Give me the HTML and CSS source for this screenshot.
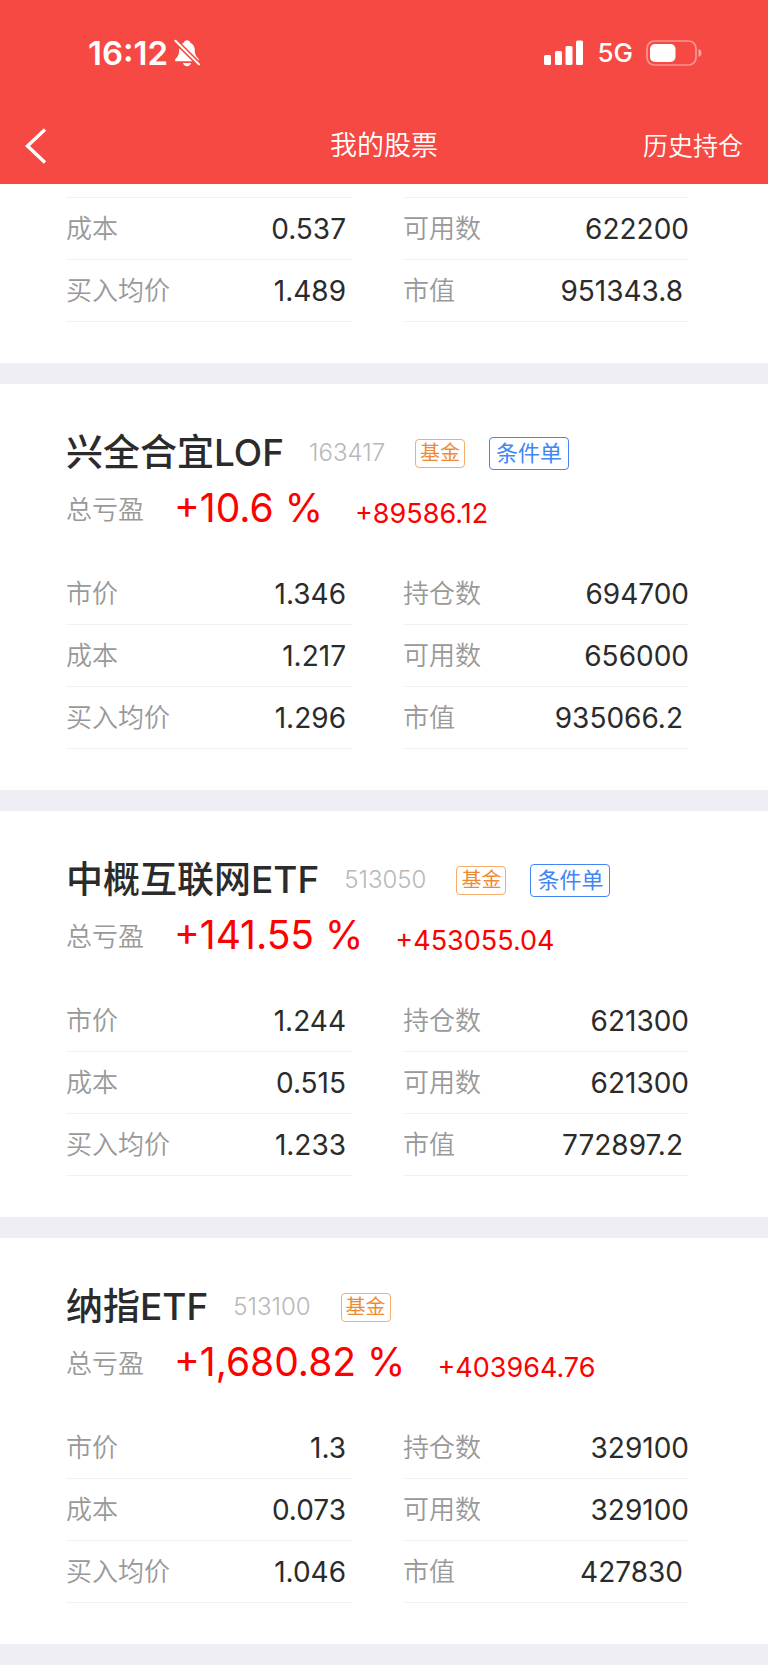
FILE: index.html
```html
<!DOCTYPE html>
<html lang="zh-CN">
<head>
<meta charset="utf-8">
<meta name="viewport" content="width=device-width, initial-scale=1">
<title>我的股票</title>
<link rel="stylesheet" href="styles.css">
</head>
<body>
<header class="header">
  <div class="status">
    <div class="status-left">
      <span class="time">16:12</span>
      <svg class="bell" viewBox="0 0 26 28" width="26" height="28" aria-hidden="true">
        <path d="M13 1.2c-1.7 0-3 1-3.3 2.500C6.600 5 5.300 7.800 5.200 11c-.1 4.200-1 6.200-2.900 7.900-1.200 1.100-1.300 1.900-1.200 2.600.1.500.5.700 1.100.7h21.600c.6 0 1-.2 1.100-.7.1-.7 0-1.500-1.200-2.600-1.900-1.700-2.800-3.700-2.900-7.900-.1-3.200-1.400-6-4.500-7.300C16 2.200 14.700 1.200 13 1.200z" fill="#fff"/>
        <path d="M9 24h8c-.4 2-2 3.200-4 3.200S9.400 26 9 24z" fill="#fff"/>
        <path d="M0 .4l26 26" stroke="#f64943" stroke-width="5"/>
        <path d="M1.400 1.800l23.600 23.600" stroke="#fff" stroke-width="2" stroke-linecap="round"/>
      </svg>
    </div>
    <div class="status-right">
      <svg viewBox="0 0 40 26" width="40" height="26" fill="#fff" aria-hidden="true">
        <rect x="0" y="15" width="7" height="10" rx="1.500"/>
        <rect x="11" y="11" width="7" height="14" rx="1.500"/>
        <rect x="21.500" y="6" width="7" height="19" rx="1.500"/>
        <rect x="32" y="0.500" width="7" height="24.500" rx="1.500"/>
      </svg>
      <span class="network">5G</span>
      <svg class="battery" viewBox="0 0 56 26" width="56" height="26" aria-hidden="true">
        <rect x="1" y="1" width="49" height="24" rx="7.500" fill="none" stroke="#fff" stroke-opacity=".42" stroke-width="1.700"/>
        <path d="M52.500 9c1.800.6 3 2.200 3 4s-1.200 3.400-3 4z" fill="#fff" fill-opacity=".5"/>
        <rect x="4" y="4" width="25.500" height="18" rx="5" fill="#fff"/>
      </svg>
    </div>
  </div>
  <nav class="nav">
    <button class="back" type="button" aria-label="返回">
      <svg viewBox="0 0 22 36" width="22" height="36" aria-hidden="true"><path d="M20 1.500L2.500 18 20 34.500" fill="none" stroke="#fff" stroke-width="3.400"/></svg>
    </button>
    <h1 class="page-title">我的股票</h1>
    <a class="history" href="#">历史持仓</a>
  </nav>
</header>
<main>
  <section class="card card-partial">
    <dl class="metrics">
      <div class="metric"><dt>成本</dt><dd>0.537</dd></div>
      <div class="metric flush"><dt>可用数</dt><dd>622200</dd></div>
      <div class="metric"><dt>买入均价</dt><dd>1.489</dd></div>
      <div class="metric"><dt>市值</dt><dd>951343.8</dd></div>
    </dl>
  </section>
  <section class="card">
    <div class="heading">
      <h2 class="name">兴全合宜LOF</h2><span class="code">163417</span><span class="tag">基金</span><button class="order" type="button">条件单</button>
    </div>
    <div class="profit"><span class="profit-label">总亏盈</span><span class="percent">+10.6 %</span><span class="amount">+89586.12</span></div>
    <dl class="metrics">
      <div class="metric"><dt>市价</dt><dd>1.346</dd></div>
      <div class="metric flush"><dt>持仓数</dt><dd>694700</dd></div>
      <div class="metric"><dt>成本</dt><dd>1.217</dd></div>
      <div class="metric flush"><dt>可用数</dt><dd>656000</dd></div>
      <div class="metric"><dt>买入均价</dt><dd>1.296</dd></div>
      <div class="metric"><dt>市值</dt><dd>935066.2</dd></div>
    </dl>
  </section>
  <section class="card">
    <div class="heading">
      <h2 class="name">中概互联网ETF</h2><span class="code">513050</span><span class="tag">基金</span><button class="order" type="button">条件单</button>
    </div>
    <div class="profit"><span class="profit-label">总亏盈</span><span class="percent">+141.55 %</span><span class="amount">+453055.04</span></div>
    <dl class="metrics">
      <div class="metric"><dt>市价</dt><dd>1.244</dd></div>
      <div class="metric flush"><dt>持仓数</dt><dd>621300</dd></div>
      <div class="metric"><dt>成本</dt><dd>0.515</dd></div>
      <div class="metric flush"><dt>可用数</dt><dd>621300</dd></div>
      <div class="metric"><dt>买入均价</dt><dd>1.233</dd></div>
      <div class="metric"><dt>市值</dt><dd>772897.2</dd></div>
    </dl>
  </section>
  <section class="card">
    <div class="heading">
      <h2 class="name">纳指ETF</h2><span class="code">513100</span><span class="tag">基金</span>
    </div>
    <div class="profit"><span class="profit-label">总亏盈</span><span class="percent">+1,680.82 %</span><span class="amount">+403964.76</span></div>
    <dl class="metrics">
      <div class="metric"><dt>市价</dt><dd>1.3</dd></div>
      <div class="metric flush"><dt>持仓数</dt><dd>329100</dd></div>
      <div class="metric"><dt>成本</dt><dd>0.073</dd></div>
      <div class="metric flush"><dt>可用数</dt><dd>329100</dd></div>
      <div class="metric"><dt>买入均价</dt><dd>1.046</dd></div>
      <div class="metric"><dt>市值</dt><dd>427830</dd></div>
    </dl>
  </section>
</main>
</body>
</html>
```

FILE: styles.css
```css
* {
  box-sizing: border-box;
}

body {
  margin: 0;
  background: #efeef4;
  color: #2b2b2b;
  font-family: Inter, "Noto Sans CJK SC", sans-serif;
  font-size: 28px;
}

h1,
h2,
dl,
dd {
  margin: 0;
}

button {
  font: inherit;
  background: none;
}

.header {
  background: #f64943;
  color: #fff;
}

.status {
  display: flex;
  justify-content: space-between;
  align-items: center;
  height: 106px;
  padding: 0 66px 0 88px;
}

.status-left,
.status-right {
  display: flex;
  align-items: center;
}

.status-left {
  gap: 6px;
}

.time {
  font-size: 33px;
  font-weight: 600;
  line-height: 32px;
}

.status-right {
  gap: 13px;
}

.network {
  font-size: 26px;
  font-weight: 500;
  line-height: 26px;
}

.nav {
  display: grid;
  grid-template-columns: 1fr auto 1fr;
  align-items: center;
  height: 78px;
  padding: 2px 25px 0;
}

.back {
  justify-self: start;
  padding: 0;
  border: 0;
  line-height: 0;
  cursor: pointer;
}

.page-title {
  font-size: 27px;
  font-weight: 350;
  line-height: 36px;
}

.history {
  justify-self: end;
  color: inherit;
  font-size: 25px;
  font-weight: 350;
  line-height: 36px;
  text-decoration: none;
}

.card {
  padding: 49px 79px 41px 66px;
  margin-bottom: 21px;
  background: #fff;
}

.card-partial {
  padding-top: 13px;
}

.card-partial .metric:nth-child(-n + 2) {
  border-top: 1px solid #f2f2f2;
  height: 63px;
}

.heading {
  display: flex;
  align-items: center;
  height: 40px;
}

.name {
  font-size: 37px;
  font-weight: 500;
  line-height: 40px;
}

.code {
  margin-left: 25px;
  color: #b8b8b8;
  font-size: 24px;
  font-weight: 300;
  line-height: 28px;
}

.tag {
  margin-left: 30px;
  padding: 0 4px;
  border: 1px solid #f5ad6a;
  border-radius: 4px;
  color: #ee8a36;
  font-size: 20px;
  line-height: 27px;
}

.order {
  margin-left: 24px;
  padding: 0 6px;
  border: 1px solid #4285f5;
  border-radius: 4px;
  color: #4285f5;
  font-size: 22px;
  line-height: 31px;
  cursor: pointer;
}

.profit {
  display: flex;
  align-items: flex-end;
  height: 40px;
  margin: 15px 0 35px;
  color: #fe0000;
}

.profit-label {
  margin-right: 30px;
  color: #999;
  font-size: 26px;
  font-weight: 350;
  line-height: 36px;
}

.percent {
  margin-right: 32px;
  font-size: 39px;
  line-height: 40px;
}

.amount {
  font-size: 27px;
  line-height: 28px;
}

.metrics {
  display: grid;
  grid-template-columns: 1fr 1fr;
  column-gap: 51px;
}

.metric {
  display: flex;
  justify-content: space-between;
  align-items: center;
  height: 62px;
  padding-right: 6px;
  border-bottom: 1px solid #f2f2f2;
}

.flush {
  padding-right: 0;
}

.metric dt {
  color: #999;
  font-size: 26px;
  font-weight: 350;
  line-height: 36px;
}

.metric dd {
  line-height: 36px;
}
```
